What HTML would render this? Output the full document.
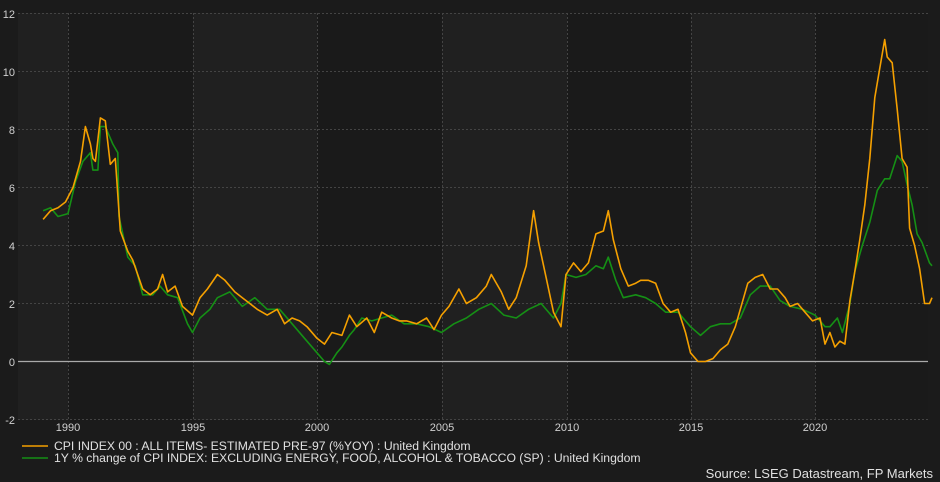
<!DOCTYPE html>
<html><head><meta charset="utf-8"><style>
html,body{margin:0;padding:0;background:#1b1b1b;}
body{width:940px;height:482px;overflow:hidden;font-family:"Liberation Sans",sans-serif;}
svg{display:block}
</style></head><body>
<svg id="c" width="940" height="482" xmlns="http://www.w3.org/2000/svg">
<rect x="0" y="0" width="940" height="482" fill="#1b1b1b"/>
<rect x="18" y="13" width="50" height="407" fill="#202020"/>
<rect x="68" y="13" width="125" height="407" fill="#1a1a1a"/>
<rect x="193" y="13" width="124" height="407" fill="#202020"/>
<rect x="317" y="13" width="125" height="407" fill="#1a1a1a"/>
<rect x="442" y="13" width="125" height="407" fill="#202020"/>
<rect x="567" y="13" width="124" height="407" fill="#1a1a1a"/>
<rect x="691" y="13" width="124" height="407" fill="#202020"/>
<rect x="815" y="13" width="113" height="407" fill="#1a1a1a"/>
<g stroke="#444" stroke-width="1" stroke-dasharray="2,2">
<line x1="18" x2="928" y1="13.5" y2="13.5"/><line x1="18" x2="928" y1="71.5" y2="71.5"/>
<line x1="18" x2="928" y1="129.5" y2="129.5"/><line x1="18" x2="928" y1="187.5" y2="187.5"/>
<line x1="18" x2="928" y1="245.5" y2="245.5"/><line x1="18" x2="928" y1="303.5" y2="303.5"/>
<line x1="18" x2="928" y1="419.5" y2="419.5"/>
<line x1="68.5" x2="68.5" y1="13" y2="420"/><line x1="193.5" x2="193.5" y1="13" y2="420"/>
<line x1="317.5" x2="317.5" y1="13" y2="420"/><line x1="442.5" x2="442.5" y1="13" y2="420"/>
<line x1="567.5" x2="567.5" y1="13" y2="420"/><line x1="691.5" x2="691.5" y1="13" y2="420"/>
<line x1="815.5" x2="815.5" y1="13" y2="420"/>
</g>
<line x1="18" x2="928" y1="361.5" y2="361.5" stroke="#aaa" stroke-width="1.3"/>
<g fill="#d0d0d0" font-size="11" text-anchor="end">
<text x="15" y="18">12</text><text x="15" y="76">10</text><text x="15" y="134">8</text>
<text x="15" y="192">6</text><text x="15" y="250">4</text><text x="15" y="308">2</text>
<text x="15" y="366">0</text><text x="15" y="424">-2</text>
</g>
<g fill="#d0d0d0" font-size="11" text-anchor="middle">
<text x="68" y="431">1990</text><text x="193" y="431">1995</text><text x="317" y="431">2000</text>
<text x="442" y="431">2005</text><text x="567" y="431">2010</text><text x="691" y="431">2015</text>
<text x="815" y="431">2020</text>
</g>
<polyline id="g" fill="none" stroke="#159015" stroke-width="1.6" stroke-linejoin="round"/>
<polyline id="o" fill="none" stroke="#f5a000" stroke-width="1.6" stroke-linejoin="round"/>
<line x1="22" x2="48" y1="446" y2="446" stroke="#f5a000" stroke-width="1.6"/>
<line x1="22" x2="48" y1="458" y2="458" stroke="#159015" stroke-width="1.6"/>
<g fill="#e0e0e0" font-size="12.2">
<text x="54" y="450">CPI INDEX 00 : ALL ITEMS- ESTIMATED PRE-97 (%YOY) : United Kingdom</text>
<text x="54" y="462">1Y % change of CPI INDEX: EXCLUDING ENERGY, FOOD, ALCOHOL &amp; TOBACCO (SP) : United Kingdom</text>
<text x="933" y="478" text-anchor="end" font-size="13">Source: LSEG Datastream, FP Markets</text>
</g>
</svg>
<script>
var O=[1989,4.9,1989.3,5.2,1989.6,5.3,1989.9,5.5,1990.2,6.0,1990.5,6.9,1990.7,8.1,1990.9,7.5,1991,7.0,1991.1,6.9,1991.3,8.4,1991.5,8.3,1991.7,6.8,1991.9,7.0,1992.1,4.5,1992.4,3.8,1992.6,3.5,1993,2.5,1993.3,2.3,1993.6,2.5,1993.8,3.0,1994,2.4,1994.3,2.6,1994.6,1.9,1995,1.6,1995.3,2.2,1995.6,2.5,1996,3.0,1996.3,2.8,1996.7,2.4,1997,2.2,1997.3,2.0,1997.6,1.8,1998,1.6,1998.4,1.8,1998.7,1.3,1999,1.5,1999.3,1.4,1999.6,1.2,2000,0.8,2000.3,0.6,2000.6,1.0,2001,0.9,2001.3,1.6,2001.6,1.2,2002,1.5,2002.3,1.0,2002.6,1.7,2003,1.5,2003.3,1.4,2003.6,1.4,2004,1.3,2004.4,1.5,2004.7,1.1,2005,1.6,2005.3,1.9,2005.7,2.5,2006,2.0,2006.4,2.2,2006.8,2.6,2007,3.0,2007.4,2.4,2007.7,1.8,2008,2.2,2008.4,3.3,2008.7,5.2,2008.9,4.1,2009.2,2.9,2009.5,1.7,2009.8,1.2,2010,3.0,2010.3,3.4,2010.6,3.1,2010.9,3.4,2011.2,4.4,2011.5,4.5,2011.7,5.2,2011.9,4.2,2012.2,3.2,2012.5,2.6,2012.8,2.7,2013,2.8,2013.3,2.8,2013.6,2.7,2013.9,2.0,2014.2,1.7,2014.5,1.8,2014.8,1.0,2015,0.3,2015.3,0.0,2015.6,0.0,2015.9,0.1,2016.2,0.4,2016.5,0.6,2016.8,1.2,2017,1.8,2017.3,2.7,2017.6,2.9,2017.9,3.0,2018.2,2.5,2018.5,2.5,2018.8,2.2,2019,1.9,2019.3,2.0,2019.6,1.7,2019.9,1.4,2020.2,1.5,2020.4,0.6,2020.6,1.0,2020.8,0.5,2021,0.7,2021.2,0.6,2021.4,2.1,2021.6,3.1,2021.8,4.2,2022,5.4,2022.2,7.0,2022.4,9.1,2022.6,10.1,2022.8,11.1,2022.9,10.5,2023.1,10.3,2023.3,8.7,2023.5,7.0,2023.7,6.7,2023.8,4.6,2024,4.0,2024.2,3.2,2024.4,2.0,2024.6,2.0,2024.7,2.2];
var G=[1989,5.2,1989.3,5.3,1989.6,5.0,1990,5.1,1990.3,6.2,1990.6,6.9,1990.9,7.2,1991,6.6,1991.2,6.6,1991.3,8.1,1991.5,8.1,1991.8,7.5,1992,7.2,1992.05,5.0,1992.4,3.6,1992.7,3.3,1993,2.3,1993.4,2.3,1993.7,2.6,1994,2.3,1994.4,2.2,1994.8,1.3,1995,1.0,1995.3,1.5,1995.7,1.8,1996,2.2,1996.5,2.4,1997,1.9,1997.5,2.2,1998,1.8,1998.5,1.8,1999,1.3,1999.5,0.8,2000,0.3,2000.3,0.0,2000.5,-0.1,2000.8,0.3,2001,0.5,2001.3,0.9,2001.5,1.1,2001.8,1.5,2002.2,1.4,2002.6,1.5,2003,1.6,2003.5,1.3,2004,1.3,2004.5,1.2,2005,1.0,2005.5,1.3,2006,1.5,2006.5,1.8,2007,2.0,2007.5,1.6,2008,1.5,2008.5,1.8,2009,2.0,2009.5,1.5,2009.8,2.0,2010,3.0,2010.4,2.9,2010.8,3.0,2011.2,3.3,2011.5,3.2,2011.7,3.6,2012,2.8,2012.3,2.2,2012.8,2.3,2013.2,2.2,2013.6,2.0,2014,1.7,2014.5,1.7,2015,1.2,2015.4,0.9,2015.8,1.2,2016.2,1.3,2016.6,1.3,2017,1.5,2017.4,2.3,2017.8,2.6,2018.2,2.6,2018.6,2.1,2019,1.9,2019.5,1.8,2020,1.6,2020.4,1.2,2020.6,1.2,2020.9,1.5,2021.1,1.0,2021.4,2.0,2021.6,3.1,2021.9,4.0,2022.2,4.8,2022.5,5.9,2022.8,6.3,2023,6.3,2023.3,7.1,2023.5,6.9,2023.7,6.1,2023.9,5.4,2024.1,4.4,2024.3,4.1,2024.6,3.4,2024.7,3.3];
function pts(a){var s=[];for(var i=0;i<a.length;i+=2){s.push((68+(a[i]-1990)*24.9).toFixed(1)+","+(361.5-a[i+1]*29).toFixed(1));}return s.join(" ");}
document.getElementById("o").setAttribute("points",pts(O));
document.getElementById("g").setAttribute("points",pts(G));
</script>
</body></html>
